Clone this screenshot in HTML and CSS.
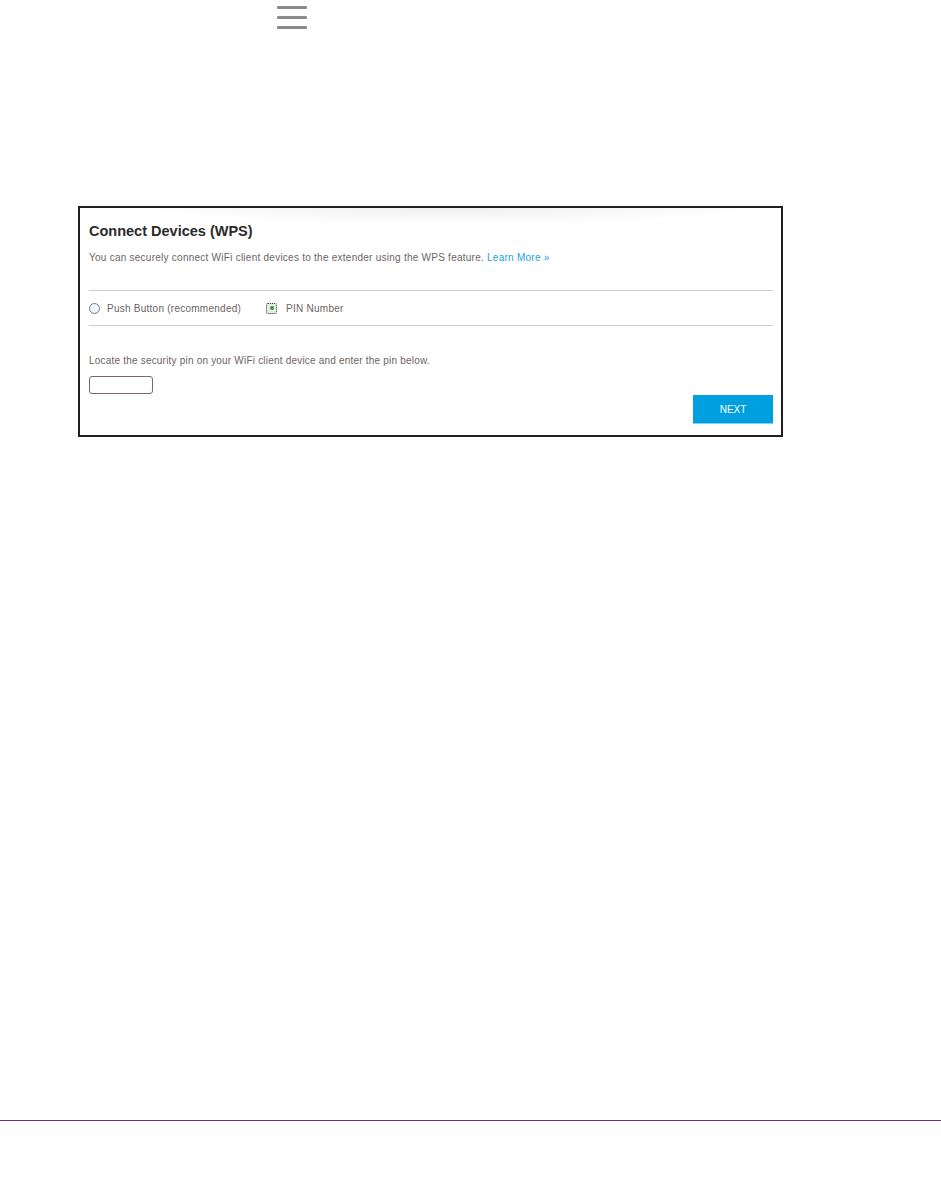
FILE: index.html
```html
<!DOCTYPE html>
<html>
<head>
<meta charset="utf-8">
<link rel="stylesheet" href="styles.css">
</head>
<body>
<div class="page">
  <div class="topbar">
    <div class="burger"><span></span><span></span><span></span></div>
  </div>
  <div class="card">
    <div class="shade"></div>
    <h1 class="title">Connect Devices (WPS)</h1>
    <p class="intro">You can securely connect WiFi client devices to the extender using the WPS feature. <a class="learn">Learn More &raquo;</a></p>
    <div class="options">
      <label class="opt"><span class="radio"></span>Push Button (recommended)</label>
      <label class="opt opt-pin"><span class="radio checked"><span class="dot"></span></span>PIN Number</label>
    </div>
    <p class="hint">Locate the security pin on your WiFi client device and enter the pin below.</p>
    <div class="pinbox"></div>
    <div class="actions"><button class="next">NEXT</button></div>
  </div>
  <div class="spacer"></div>
  <div class="footer-line"></div>
</div>
</body>
</html>
```
FILE: styles.css
```css
html, body {
  margin: 0;
  padding: 0;
  background: #fff;
}
body {
  font-family: "Liberation Sans", Arial, sans-serif;
  width: 941px;
  height: 1188px;
}
.page {
  display: flex;
  flex-direction: column;
}
.topbar {
  height: 206px;
  padding-left: 277px;
  box-sizing: border-box;
  padding-top: 6px;
}
.burger {
  display: flex;
  flex-direction: column;
  gap: 7px;
  width: 30px;
}
.burger span {
  display: block;
  height: 3px;
  background: #8a8a8a;
  border-radius: 1px;
}
.card {
  position: relative;
  margin-left: 78px;
  width: 705px;
  height: 231px;
  box-sizing: border-box;
  border: 2px solid #231f20;
  padding: 0 8px 0 9px;
}
.shade {
  position: absolute;
  left: 60px;
  right: 20px;
  top: 0;
  height: 16px;
  background: radial-gradient(ellipse 50% 100% at 50% 0, #efefef, rgba(255,255,255,0));
}
.title {
  position: relative;
  margin: 0;
  padding-top: 15px;
  font-size: 14.5px;
  line-height: 16px;
  font-weight: bold;
  color: #2b2b2b;
}
.intro {
  margin: 13px 0 0 0;
  font-size: 10px;
  letter-spacing: 0.25px;
  line-height: 12px;
  color: #6b6464;
  padding-bottom: 26px;
  border-bottom: 1px solid #cfcfcf;
}
.learn {
  color: #1aa3e0;
}
.options {
  display: flex;
  align-items: center;
  height: 34px;
  border-bottom: 1px solid #cfcfcf;
  font-size: 10px;
  letter-spacing: 0.25px;
  color: #6b6464;
}
.opt {
  display: flex;
  align-items: center;
  margin-right: 25px;
}
.radio {
  display: inline-flex;
  align-items: center;
  justify-content: center;
  width: 9px;
  height: 9px;
  border: 1px solid #5f7e9a;
  border-radius: 50%;
  margin-right: 7px;
  background: #f4f6f8;
}
.radio.checked {
  border: 1px dotted #333;
  border-radius: 2px;
  background: #e6ebe6;
  margin-right: 9px;
}
.dot {
  width: 4px;
  height: 4px;
  border-radius: 50%;
  background: #2fa02f;
}
.hint {
  margin: 29px 0 0 0;
  font-size: 10px;
  letter-spacing: 0.2px;
  line-height: 12px;
  color: #6b6464;
}
.pinbox {
  margin-top: 9px;
  width: 64px;
  height: 18px;
  box-sizing: border-box;
  border: 1px solid #7a6666;
  border-radius: 3px;
}
.actions {
  display: flex;
  justify-content: flex-end;
  margin-top: 1px;
}
.next {
  width: 80px;
  height: 29px;
  background: #00a0e0;
  border: none;
  border-bottom: 1px solid #7fd0f0;
  color: #fff;
  font-family: "Liberation Sans", Arial, sans-serif;
  font-size: 10px;
  padding: 0;
}
.spacer {
  height: 683px;
}
.footer-line {
  height: 1px;
  background: #6c2a93;
}
```
